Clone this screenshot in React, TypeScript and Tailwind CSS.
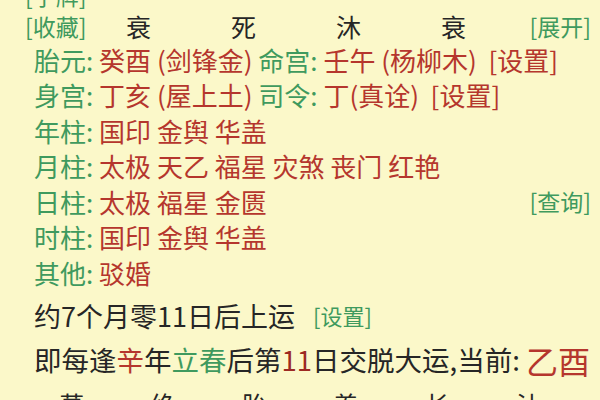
const GREEN = 'text-[#3f9a5e]';
const RED = 'text-[#b5362d]';

type Part = { t: string; c: 'g' | 'r' };

const pillars: { label: string; items: Part[]; right?: string }[] = [
  {
    label: '胎元',
    items: [
      { t: '癸酉 (剑锋金) ', c: 'r' },
      { t: '命宫: ', c: 'g' },
      { t: '壬午 (杨柳木)  [设置]', c: 'r' },
    ],
  },
  {
    label: '身宫',
    items: [
      { t: '丁亥 (屋上土) ', c: 'r' },
      { t: '司令: ', c: 'g' },
      { t: '丁(真诠)  [设置]', c: 'r' },
    ],
  },
  { label: '年柱', items: [{ t: '国印 金舆 华盖', c: 'r' }] },
  { label: '月柱', items: [{ t: '太极 天乙 福星 灾煞 丧门 红艳', c: 'r' }] },
  { label: '日柱', items: [{ t: '太极 福星 金匮', c: 'r' }], right: '[查询]' },
  { label: '时柱', items: [{ t: '国印 金舆 华盖', c: 'r' }] },
  { label: '其他', items: [{ t: '驳婚', c: 'r' }] },
];

const topStates = ['衰', '死', '沐', '衰'];
const bottomStates = ['墓', '绝', '胎', '养', '长', '沐'];

export default function App() {
  return (
    <div className="w-[600px] h-[400px] overflow-hidden bg-[#fbf8c9] font-['Noto_Sans_CJK_SC','Noto_Sans',sans-serif] whitespace-pre">
      <div className="flex flex-col">
        {/* cut-off line at the very top */}
        <div className={`mt-[-20px] h-[31px] flex items-center pl-[25px] text-[23px] leading-none ${GREEN}`}>
          [字牌]
        </div>

        <div className="h-[31px] flex items-center pl-[25px] pr-[9px] leading-none">
          <span className={`w-[61px] text-[23px] ${GREEN}`}>[收藏]</span>
          {topStates.map((s, i) => (
            <span key={i} className="w-[105px] text-center text-[25px] text-[#262626]">
              {s}
            </span>
          ))}
          <span className={`ml-auto text-[23px] ${GREEN}`}>[展开]</span>
        </div>

        {pillars.map((row) => (
          <div key={row.label} className="h-[35.5px] flex items-center pl-[34px] pr-[9px] text-[26px] leading-none">
            <span className={GREEN}>{row.label}: </span>
            {row.items.map((p, i) => (
              <span key={i} className={p.c === 'g' ? GREEN : RED}>
                {p.t}
              </span>
            ))}
            {row.right && <span className={`ml-auto text-[23px] ${GREEN}`}>{row.right}</span>}
          </div>
        ))}

        <div className="h-[49px] flex items-center pl-[34px] text-[27px] leading-none text-[#262626]">
          <span>约7个月零11日后上运   </span>
          <span className={`text-[22px] ${GREEN}`}>[设置]</span>
        </div>

        <div className="h-[41px] flex items-center pl-[34px] text-[27.5px] leading-none text-[#262626]">
          <span>即每逢</span>
          <span className={RED}>辛</span>
          <span>年</span>
          <span className={GREEN}>立春</span>
          <span>后第</span>
          <span className="text-[#9c2a22]">11</span>
          <span>日交脱大运,当前: </span>
          <span className={`text-[32px] ${RED}`}>乙酉</span>
        </div>

        <div className="h-[47px] flex items-center pl-[26px] text-[25px] leading-none text-[#262626]">
          {bottomStates.map((s, i) => (
            <span key={i} className="w-[91.4px] text-center">
              {s}
            </span>
          ))}
        </div>
      </div>
    </div>
  );
}
